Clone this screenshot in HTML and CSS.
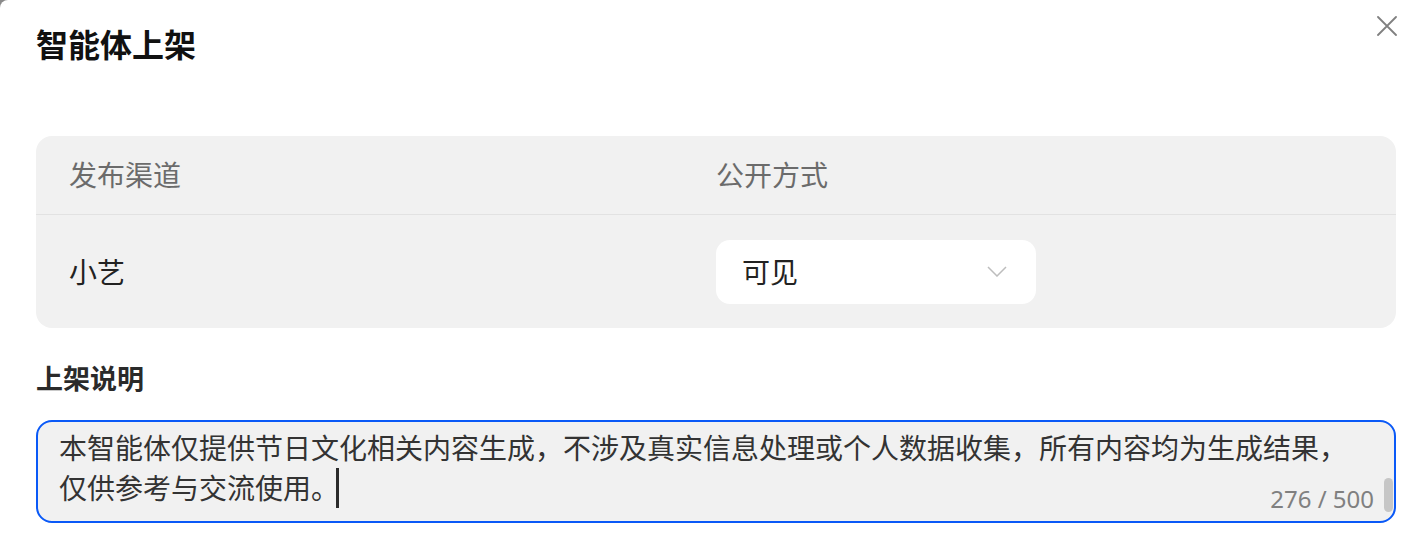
FILE: index.html
```html
<!DOCTYPE html>
<html lang="zh-CN">
<head>
  <meta charset="UTF-8">
  <meta name="viewport" content="width=device-width, initial-scale=1.0">
  <title>智能体上架</title>
  <link rel="stylesheet" href="styles.css">
</head>
<body>

  <div class="dialog">
    <h2 class="dialog-title">智能体上架</h2>
    <button class="close-btn" aria-label="关闭">
      <svg width="20" height="20" viewBox="0 0 20 20">
        <path d="M1 1 L19 19 M19 1 L1 19" stroke="#808080" stroke-width="1.8" fill="none" stroke-linecap="round"/>
      </svg>
    </button>

    <!-- 发布渠道表格 -->
    <div class="channel-table">
      <div class="row head">
        <div class="cell">发布渠道</div>
        <div class="cell">公开方式</div>
      </div>
      <div class="row">
        <div class="cell name">小艺</div>
        <div class="cell">
          <div class="select">
            <span>可见</span>
            <svg width="20" height="11" viewBox="0 0 20 11">
              <polyline points="1,1 10,10 19,1" stroke="#bdbdbd" stroke-width="1.5" fill="none"/>
            </svg>
          </div>
        </div>
      </div>
    </div>

    <!-- 上架说明 -->
    <h4 class="field-label">上架说明</h4>
    <div class="textarea">
      <p class="textarea-text">本智能体仅提供节日文化相关内容生成，不涉及真实信息处理或个人数据收集，所有内容均为生成结果，<br>仅供参考与交流使用。<span class="caret"></span></p>
      <span class="counter">276 / 500</span>
      <span class="scroll-thumb"></span>
    </div>
  </div>

</body>
</html>
```

FILE: styles.css
```css
* {
  box-sizing: border-box;
}

html {
  background: #8a8a8a;
}

body {
  margin: 0;
  font-family: "Noto Sans", "Noto Sans CJK SC", sans-serif;
}

.dialog {
  position: relative;
  min-height: 100vh;
  background: #fff;
  border-top-left-radius: 8px;
  padding: 23px 20px 0 36px;
}

.dialog-title {
  margin: 0;
  font-size: 32px;
  line-height: 44px;
  font-weight: 700;
  color: #111;
}

.close-btn {
  position: absolute;
  top: 16px;
  right: 19px;
  padding: 0;
  border: none;
  background: none;
  width: 20px;
  height: 20px;
  cursor: pointer;
}

.close-btn svg {
  display: block;
}

.channel-table {
  margin-top: 69px;
  background: #f1f1f1;
  border-radius: 16px;
  padding: 0 33px;
}

.row {
  display: grid;
  grid-template-columns: 1fr 1fr;
  align-items: center;
  height: 113px;
}

.row.head {
  height: 79px;
  border-bottom: 1px solid #e2e2e2;
  margin: 0 -33px;
  padding: 0 33px;
}

.cell {
  font-size: 28px;
  line-height: 40px;
  color: #222;
}

.row.head .cell {
  color: #6b6b6b;
}

.select {
  width: 320px;
  height: 64px;
  background: #fff;
  border-radius: 14px;
  padding: 0 29px 0 26px;
  display: flex;
  align-items: center;
  justify-content: space-between;
  font-size: 28px;
  color: #222;
}

.select svg {
  display: block;
}

.field-label {
  margin: 33px 0 0;
  font-size: 27px;
  line-height: 36px;
  font-weight: 700;
  color: #2a2a2a;
}

.textarea {
  position: relative;
  margin-top: 23px;
  height: 103px;
  border: 2px solid #0a59f7;
  border-radius: 16px;
  background: #f1f1f1;
  padding: 6px 50px 13px 21px;
}

.textarea-text {
  margin: 0;
  font-size: 28px;
  line-height: 40px;
  color: #333;
  white-space: nowrap;
}

.caret {
  display: inline-block;
  width: 3px;
  height: 40px;
  margin-left: -3px;
  vertical-align: top;
  background: #2b2b2b;
}

.counter {
  position: absolute;
  right: 20px;
  bottom: 10px;
  font-size: 24px;
  line-height: 24px;
  color: #808080;
}

.scroll-thumb {
  position: absolute;
  right: 1px;
  top: 56px;
  width: 9px;
  height: 34px;
  border-radius: 5px;
  background: #c6c6c6;
}
```
